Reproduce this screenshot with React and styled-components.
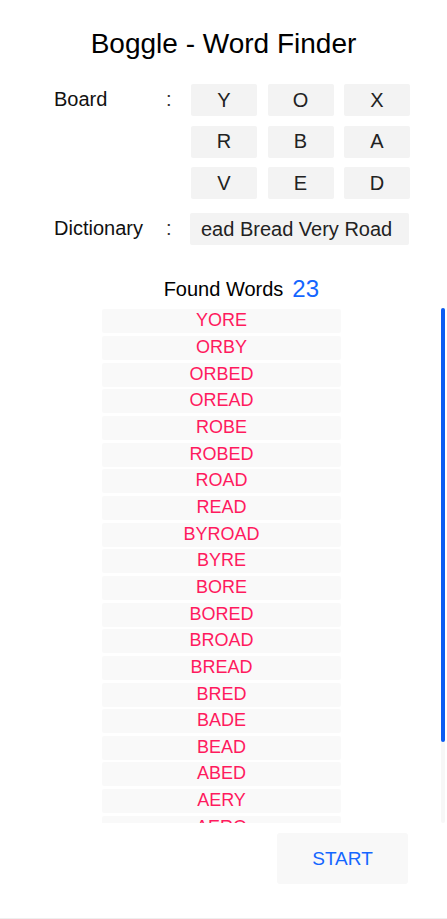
import React from "react";
import styled, { createGlobalStyle } from "styled-components";

const GlobalStyle = createGlobalStyle`
  html, body {
    margin: 0;
    padding: 0;
    background: #fff;
  }
  body {
    font-family: "Liberation Sans", Arial, sans-serif;
    color: #111;
  }
`;

const board = [
  ["Y", "O", "X"],
  ["R", "B", "A"],
  ["V", "E", "D"],
];

const words = [
  "YORE", "ORBY", "ORBED", "OREAD", "ROBE", "ROBED", "ROAD", "READ",
  "BYROAD", "BYRE", "BORE", "BORED", "BROAD", "BREAD", "BRED", "BADE",
  "BEAD", "ABED", "AERY", "AERO", "VERB", "DERBY", "OBA",
];

const LIST_HEIGHT = 515;
const ROW_PITCH = 26.67;

const Screen = styled.div`
  height: 919px;
  box-sizing: border-box;
  border-bottom: 1px solid #efefef;
  display: flex;
  flex-direction: column;
`;

const Title = styled.h1`
  margin: 28px 0 0;
  font-size: 28px;
  line-height: 32px;
  font-weight: normal;
  text-align: center;
  color: #000;
`;

const FieldRow = styled.div`
  display: flex;
  align-items: flex-start;
  padding-left: 54px;
  margin-top: ${(p) => p.$top}px;
`;

const Label = styled.div`
  width: 112px;
  font-size: 20px;
  line-height: 30px;
  color: #111;
`;

const Colon = styled.div`
  width: 24px;
  font-size: 20px;
  line-height: 30px;
  color: #333;
`;

const Grid = styled.div`
  display: grid;
  grid-template-columns: repeat(3, 66px);
  column-gap: 10.5px;
  row-gap: 9.5px;
  margin-left: 1px;
`;

const Tile = styled.div`
  height: 32px;
  border-radius: 2px;
  background: #f3f3f3;
  display: flex;
  align-items: center;
  justify-content: center;
  font-size: 20px;
  color: #222;
`;

const DictBox = styled.div`
  width: 219px;
  height: 32px;
  box-sizing: border-box;
  padding: 0 0 0 11px;
  border-radius: 2px;
  background: #f3f3f3;
  display: flex;
  align-items: center;
  overflow: hidden;
  white-space: nowrap;
  font-size: 20px;
  color: #222;
`;

const Heading = styled.div`
  margin-top: 32px;
  text-align: center;
`;

const HeadingText = styled.span`
  position: relative;
  font-size: 20px;
  line-height: 24px;
  color: #000;
`;

const Count = styled.span`
  position: absolute;
  left: 100%;
  bottom: -1px;
  margin-left: 9px;
  font-size: 24px;
  line-height: 24px;
  color: #1466ff;
`;

const ListFrame = styled.div`
  position: relative;
  margin-top: 7px;
  height: ${LIST_HEIGHT}px;
`;

const WordList = styled.div`
  height: 100%;
  overflow: hidden;
  display: flex;
  flex-direction: column;
  align-items: center;
  padding-right: 4px;
`;

const ScrollTrack = styled.div`
  position: absolute;
  top: 0;
  right: 2px;
  width: 4px;
  height: 100%;
  border-radius: 2px;
  background: #f7f7f7;
`;

const ScrollThumb = styled.div`
  width: 100%;
  border-radius: 2px;
  background: #0a5cf2;
`;

const WordItem = styled.div`
  flex: none;
  width: 239px;
  height: 24px;
  margin: 1.335px 0;
  border-radius: 2px;
  background: #f9f9f9;
  text-align: center;
  font-size: 18px;
  line-height: 22px;
  color: #ff1a5e;
`;

const Footer = styled.div`
  display: flex;
  justify-content: flex-end;
  padding: 10px 39px 0 0;
`;

const StartButton = styled.button`
  width: 131px;
  height: 51px;
  border: none;
  border-radius: 3px;
  background: #f8f8f8;
  font-family: "Liberation Sans", Arial, sans-serif;
  font-size: 19px;
  color: #1466ff;
  padding: 0;
  cursor: pointer;
`;

export default function App() {
  const contentHeight = words.length * ROW_PITCH;
  const thumbHeight = Math.min(LIST_HEIGHT, (LIST_HEIGHT * LIST_HEIGHT) / contentHeight) + 2;

  return (
    <>
      <GlobalStyle />
      <Screen>
        <Title>Boggle - Word Finder</Title>
        <FieldRow $top={24}>
          <Label>Board</Label>
          <Colon>:</Colon>
          <Grid>
            {board.flat().map((letter, i) => (
              <Tile key={i}>{letter}</Tile>
            ))}
          </Grid>
        </FieldRow>
        <FieldRow $top={14}>
          <Label>Dictionary</Label>
          <Colon>:</Colon>
          <DictBox>ead Bread Very Road</DictBox>
        </FieldRow>
        <Heading>
          <HeadingText>
            Found Words<Count>{words.length}</Count>
          </HeadingText>
        </Heading>
        <ListFrame>
          <WordList>
            {words.map((w) => (
              <WordItem key={w}>{w}</WordItem>
            ))}
          </WordList>
          <ScrollTrack>
            <ScrollThumb style={{ height: thumbHeight }} />
          </ScrollTrack>
        </ListFrame>
        <Footer>
          <StartButton>START</StartButton>
        </Footer>
      </Screen>
    </>
  );
}
